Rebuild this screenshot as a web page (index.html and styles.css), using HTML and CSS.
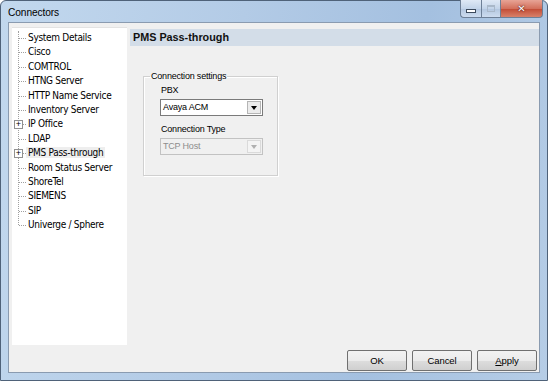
FILE: index.html
```html
<!DOCTYPE html>
<html lang="en">
<head>
  <meta charset="UTF-8">
  <title>Connectors</title>
  <link rel="stylesheet" href="styles.css">
</head>
<body>
  <div class="window">
    <div class="titlebar">
      <span class="title">Connectors</span>
      <div class="caption">
        <span class="cap-btn cap-min"><i></i></span>
        <span class="cap-btn cap-max"><i></i></span>
        <span class="cap-btn cap-close">&#x2715;</span>
      </div>
    </div>

    <div class="client">
      <div class="main">
        <div class="tree">
          <ul class="nodes">
            <li>System Details</li>
            <li>Cisco</li>
            <li>COMTROL</li>
            <li>HTNG Server</li>
            <li>HTTP Name Service</li>
            <li>Inventory Server</li>
            <li class="has-kids"><span class="expander">+</span>IP Office</li>
            <li>LDAP</li>
            <li class="has-kids hot"><span class="expander">+</span><span class="label">PMS Pass-through</span></li>
            <li>Room Status Server</li>
            <li>ShoreTel</li>
            <li>SIEMENS</li>
            <li>SIP</li>
            <li class="last">Univerge / Sphere</li>
          </ul>
        </div>

        <div class="panel">
          <div class="panel-head">PMS Pass-through</div>
          <fieldset class="group">
            <legend>Connection settings</legend>
            <label class="field-label">PBX</label>
            <div class="combo">
              <span class="combo-text">Avaya ACM</span>
              <span class="combo-btn"><i></i></span>
            </div>
            <label class="field-label">Connection Type</label>
            <div class="combo disabled">
              <span class="combo-text">TCP Host</span>
              <span class="combo-btn"><i></i></span>
            </div>
          </fieldset>
        </div>
      </div>

      <div class="buttons">
        <button class="btn">OK</button>
        <button class="btn">Cancel</button>
        <button class="btn"><u>A</u>pply</button>
      </div>
    </div>
  </div>
</body>
</html>
```

FILE: styles.css
```css
body {
  margin: 0;
  font-family: "Liberation Sans", Arial, sans-serif;
  font-size: 9px;
  letter-spacing: -0.2px;
  color: #000;
  background: #fff;
}
.window {
  width: 548px;
  height: 381px;
  box-sizing: border-box;
  display: flex;
  flex-direction: column;
  border: 1px solid #4f6279;
  border-radius: 6px 6px 0 0;
  background: linear-gradient(100deg, #c2d8ee 0%, #b3cbe6 40%, #a4c0e0 70%, #b6cde6 100%);
  padding: 0 7px 7px 7px;
}
.titlebar {
  height: 21px;
  display: flex;
  align-items: center;
  justify-content: space-between;
}
.title {
  font-size: 10.2px;
  letter-spacing: -0.1px;
  color: #000;
  padding-top: 1px;
}
.caption {
  display: flex;
  align-self: flex-start;
  margin-top: -1px;
  margin-right: -3px;
}
.cap-btn {
  height: 18px;
  display: flex;
  align-items: center;
  justify-content: center;
  border: 1px solid #6d7f96;
  border-top: none;
  box-sizing: border-box;
}
.cap-min {
  width: 21px;
  border-radius: 0 0 0 4px;
  border-right: none;
  background: linear-gradient(#dfe9f5, #c3d4e9 50%, #b2c6df 51%, #cddcef);
}
.cap-max {
  width: 20px;
  background: linear-gradient(#dfe9f5, #c3d4e9 50%, #b2c6df 51%, #cddcef);
}
.cap-min i {
  width: 8px;
  height: 2px;
  margin-top: 4px;
  background: #fff;
  border: 1px solid #3c4a5c;
}
.cap-max i {
  width: 6px;
  height: 5px;
  border: 1px solid #a9b8c9;
  box-shadow: inset 0 1px 0 #a9b8c9;
}
.cap-close {
  width: 42px;
  border-left: none;
  border-radius: 0 0 4px 0;
  background: linear-gradient(#e7a496, #d3705c 50%, #c14a34 51%, #d8816a);
  color: #fff;
  font-family: "DejaVu Sans", sans-serif;
  font-size: 10px;
  font-weight: bold;
  letter-spacing: 0;
  text-shadow: 0 0 2px #5a1a10, 0 0 1px #5a1a10;
}
.client {
  flex: 1;
  display: flex;
  flex-direction: column;
  background: #f0f0f0;
  border: 1px solid #8a9bb0;
}
.main {
  flex: 1;
  display: flex;
  padding: 4px 0 0 3px;
  min-height: 0;
}
.tree {
  width: 115px;
  background: #fff;
  border-top: 1px solid #e3e3e3;
  padding: 3px 0 0 0;
  font-family: "DejaVu Sans Condensed", "Liberation Sans", sans-serif;
  font-size: 10px;
  letter-spacing: -0.3px;
}
.nodes {
  list-style: none;
  margin: 0;
  padding: 0;
  position: relative;
}
.nodes::before {
  content: "";
  position: absolute;
  left: 6px;
  top: 0;
  height: 194px;
  border-left: 1px dotted #a0a0a0;
}
.nodes li {
  position: relative;
  height: 14.4px;
  line-height: 14px;
  padding-left: 16px;
  white-space: nowrap;
}
.nodes li::before {
  content: "";
  position: absolute;
  left: 7px;
  top: 7px;
  width: 7px;
  border-top: 1px dotted #a0a0a0;
}
.expander {
  position: absolute;
  left: 2px;
  top: 3px;
  width: 7px;
  height: 7px;
  border: 1px solid #919191;
  background: #fff;
  font-family: "Liberation Sans", sans-serif;
  font-size: 9px;
  line-height: 7px;
  letter-spacing: 0;
  text-align: center;
  color: #000;
  z-index: 1;
}
.hot .label {
  background: #eeeeee;
  padding: 0 2px;
  margin-left: -2px;
}
.panel {
  flex: 1;
  padding: 2px 0 0 3px;
}
.panel-head {
  height: 17px;
  background: #d3dde8;
  font-size: 10.8px;
  font-weight: bold;
  letter-spacing: 0;
  line-height: 17px;
  padding-left: 3px;
  color: #111;
}
.group {
  width: 118px;
  height: 102px;
  margin: 24px 0 0 13px;
  padding: 2px 0 0 15px;
  border: 1px solid #d0d0d0;
  box-shadow: 1px 1px 0 #fff inset, 1px 1px 0 #fff;
  box-sizing: content-box;
}
.group legend {
  padding: 0 1px;
  margin-left: -9px;
  line-height: 12px;
}
.field-label {
  display: block;
  line-height: 12px;
  margin: 0 0 3px 2px;
}
.combo {
  width: 101px;
  height: 15px;
  display: flex;
  border: 1px solid #7a7a7a;
  background: #fff;
  margin: 0 0 7px 1px;
}
.combo-text {
  flex: 1;
  line-height: 15px;
  padding-left: 2px;
}
.combo-btn {
  width: 14px;
  margin: 1px;
  display: flex;
  align-items: center;
  justify-content: center;
  background: #ececec;
  border: 1px solid #b5b5b5;
  box-sizing: border-box;
}
.combo-btn i {
  width: 0;
  height: 0;
  border-left: 3px solid transparent;
  border-right: 3px solid transparent;
  border-top: 4px solid #000;
  margin-top: 1px;
}
.combo.disabled {
  background: #f0f0f0;
  border-color: #c2c2c2;
  color: #8d8d8d;
}
.combo.disabled .combo-btn {
  border-color: #dadada;
  background: #f4f4f4;
}
.combo.disabled .combo-btn i {
  border-top-color: #b0b0b0;
}
.buttons {
  display: flex;
  justify-content: flex-end;
  gap: 5px;
  padding: 5px 2px 1px 0;
}
.btn {
  width: 60px;
  height: 21px;
  font-family: "Liberation Sans", Arial, sans-serif;
  font-size: 9.5px;
  letter-spacing: -0.1px;
  color: #000;
  border: 1px solid #707070;
  border-radius: 2px;
  background: linear-gradient(#f2f2f2, #ebebeb 50%, #dddddd 51%, #cfcfcf);
  padding: 0;
}
.btn u { text-decoration: underline; }
```
